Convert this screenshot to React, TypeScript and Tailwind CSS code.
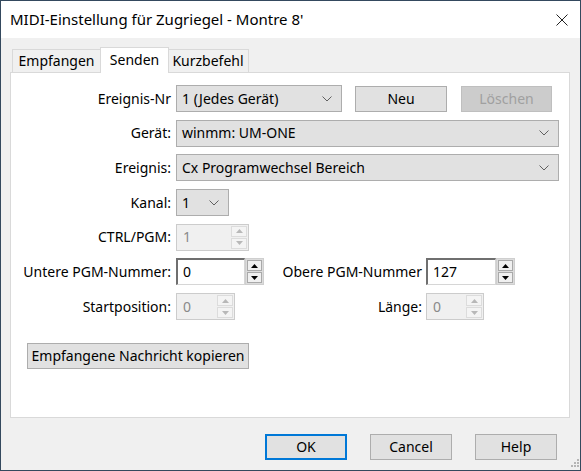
import React from "react";

function Chevron() {
  return (
    <svg width="10" height="6" viewBox="0 0 10 6" className="shrink-0">
      <path d="M0.5 0.5 L5 5 L9.5 0.5" fill="none" stroke="#606060" strokeWidth="1" />
    </svg>
  );
}

function Combo({ text, w }: { text: string; w: string }) {
  return (
    <div className={`${w} h-[27px] border border-[#adadad] bg-[#e1e1e1] flex items-center justify-between pl-[5px] pr-[9px]`}>
      <span>{text}</span>
      <Chevron />
    </div>
  );
}

function Arrow({ up, color }: { up?: boolean; color: string }) {
  return (
    <svg width="7" height="4" viewBox="0 0 7 4">
      {up ? <path d="M0 4 L3.5 0 L7 4 Z" fill={color} /> : <path d="M0 0 L3.5 4 L7 0 Z" fill={color} />}
    </svg>
  );
}

function Spin({ value, w, disabled }: { value: string; w: string; disabled?: boolean }) {
  if (disabled) {
    return (
      <div className={`${w} h-[27px] border border-[#cccccc] bg-[#f0f0f0] flex`}>
        <div className="flex-1 flex items-center pl-[6px] text-[#8a8a8a]">{value}</div>
        <div className="w-[18px] flex flex-col p-[1px] gap-[1px]">
          <div className="flex-1 border border-[#dcdcdc] bg-[#f4f4f4] flex items-center justify-center">
            <Arrow up color="#b8b8b8" />
          </div>
          <div className="flex-1 border border-[#dcdcdc] bg-[#f4f4f4] flex items-center justify-center">
            <Arrow color="#b8b8b8" />
          </div>
        </div>
      </div>
    );
  }
  return (
    <div className={`${w} h-[27px] flex`}>
      <div className="flex-1 border-t-2 border-l-2 border-t-[#6f6f6f] border-l-[#6f6f6f] border-b border-r border-b-[#d6d6d6] border-r-[#d6d6d6] bg-white flex items-center pl-[5px]">
        {value}
      </div>
      <div className="w-[19px] flex flex-col border border-[#cfcfcf] bg-[#dcdcdc] p-[1px] gap-[1px]">
        <div className="flex-1 border border-[#a9a9a9] bg-[#f0f0f0] flex items-center justify-center">
          <Arrow up color="#000" />
        </div>
        <div className="flex-1 border border-[#a9a9a9] bg-[#f0f0f0] flex items-center justify-center">
          <Arrow color="#000" />
        </div>
      </div>
    </div>
  );
}

function Row({ label, children }: { label: string; children: React.ReactNode }) {
  return (
    <div className="flex items-center h-[27px]">
      <div className="w-[161px] text-right pr-[1px]">{label}</div>
      <div className="ml-[4px] flex items-center">{children}</div>
    </div>
  );
}

function Btn({ children, w, kind }: { children: React.ReactNode; w: string; kind?: "default" | "disabled" }) {
  const cls =
    kind === "default"
      ? "border-2 border-[#0078d7] bg-[#e1e1e1]"
      : kind === "disabled"
      ? "border border-[#bfbfbf] bg-[#cccccc] text-[#a0a0a0]"
      : "border border-[#adadad] bg-[#e1e1e1]";
  return <div className={`${w} h-[26px] flex items-center justify-center ${cls}`}>{children}</div>;
}

export default function App() {
  return (
    <div className="w-[581px] h-[471px] border border-[#34495e] bg-[#f0f0f0] flex flex-col font-['Noto_Sans',sans-serif] text-[14px] leading-none text-black relative">
      {/* title bar */}
      <div className="h-[37px] bg-white flex items-center justify-between pl-[9px] pr-[12px]">
        <span className="text-[15px]">MIDI-Einstellung für Zugriegel - Montre 8'</span>
        <svg width="12" height="12" viewBox="0 0 12 12">
          <path d="M0.5 0.5 L11.5 11.5 M11.5 0.5 L0.5 11.5" stroke="#222" strokeWidth="1" />
        </svg>
      </div>

      {/* tabs */}
      <div className="pl-[9px] pt-[9px]">
        <div className="flex items-end h-[25px] pl-[2px]">
          <div className="w-[89px] h-[23px] border border-b-0 border-[#d9d9d9] bg-[#f0f0f0] flex items-center justify-center">Empfangen</div>
          <div className="w-[69px] h-[26px] -mx-[1px] mb-[-1px] z-10 border border-b-0 border-[#d9d9d9] bg-white flex items-center justify-center pb-[2px]">Senden</div>
          <div className="w-[81px] h-[23px] border border-b-0 border-l-0 border-[#d9d9d9] bg-[#f0f0f0] flex items-center justify-center">Kurzbefehl</div>
        </div>

        {/* panel */}
        <div className="w-[560px] h-[346px] border border-[#d9d9d9] bg-white pt-[12px] flex flex-col">
          <div className="flex flex-col gap-[7.7px]">
            <Row label="Ereignis-Nr">
              <Combo text="1 (Jedes Gerät)" w="w-[166px]" />
              <div className="ml-[13px]">
                <Btn w="w-[92px]">Neu</Btn>
              </div>
              <div className="ml-[14px]">
                <Btn w="w-[91px]" kind="disabled">Löschen</Btn>
              </div>
            </Row>
            <Row label="Gerät:">
              <Combo text="winmm: UM-ONE" w="w-[383px]" />
            </Row>
            <Row label="Ereignis:">
              <Combo text="Cx Programwechsel Bereich" w="w-[383px]" />
            </Row>
            <Row label="Kanal:">
              <Combo text="1" w="w-[53px]" />
            </Row>
            <Row label="CTRL/PGM:">
              <Spin value="1" w="w-[73px]" disabled />
            </Row>
            <Row label="Untere PGM-Nummer:">
              <div className="w-[97px]">
                <Spin value="0" w="w-[88px]" />
              </div>
              <div className="w-[149px] text-right">Obere PGM-Nummer</div>
              <div className="ml-[4px]">
                <Spin value="127" w="w-[89px]" />
              </div>
            </Row>
            <Row label="Startposition:">
              <div className="w-[97px]">
                <Spin value="0" w="w-[59px]" disabled />
              </div>
              <div className="w-[149px] text-right">Länge:</div>
              <div className="ml-[4px]">
                <Spin value="0" w="w-[58px]" disabled />
              </div>
            </Row>
          </div>
          <div className="mt-[23px] ml-[16px]">
            <Btn w="w-[222px]">Empfangene Nachricht kopieren</Btn>
          </div>
        </div>
      </div>

      {/* bottom buttons */}
      <div className="flex justify-end gap-[23px] pr-[23px] mt-[16px]">
        <Btn w="w-[82px]" kind="default">OK</Btn>
        <Btn w="w-[82px]">Cancel</Btn>
        <Btn w="w-[82px]">Help</Btn>
      </div>

      {/* resize grip */}
      <svg width="10" height="10" viewBox="0 0 10 10" className="absolute right-[1px] bottom-[1px]">
        <rect x="8" y="0" width="2" height="2" fill="#b5b5b5" />
        <rect x="5" y="3" width="2" height="2" fill="#b5b5b5" />
        <rect x="8" y="3" width="2" height="2" fill="#b5b5b5" />
        <rect x="2" y="6" width="2" height="2" fill="#b5b5b5" />
        <rect x="5" y="6" width="2" height="2" fill="#b5b5b5" />
        <rect x="8" y="6" width="2" height="2" fill="#b5b5b5" />
      </svg>
    </div>
  );
}
